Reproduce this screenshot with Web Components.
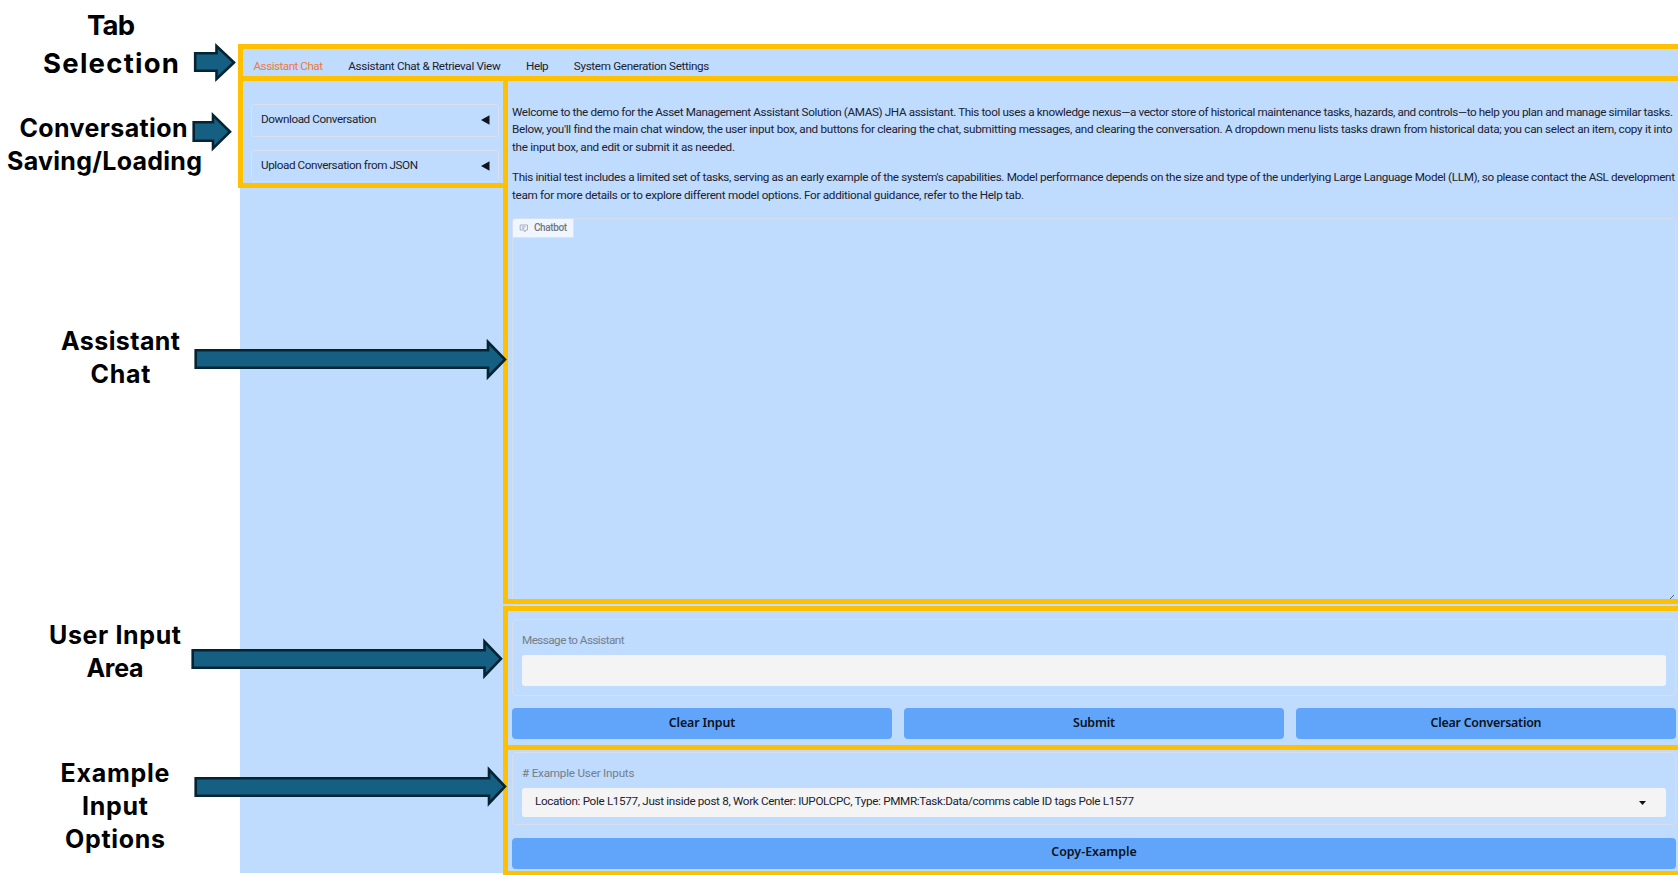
<!DOCTYPE html>
<html lang="en">
<head>
<meta charset="utf-8">
<title>AMAS JHA assistant guide</title>
<style>
html,body{margin:0;height:875px;overflow:hidden;background:#fff}
body{font-family:Roboto,"Liberation Sans",sans-serif;font-size:11.7px;color:#1b2230}
</style>
</head>
<body>
<guide-page></guide-page>
<script>
const define = (name, html, after) => customElements.define(name, class extends HTMLElement {
  connectedCallback() {
    if (this.shadowRoot) return;
    const t = document.createElement('template');
    t.innerHTML = typeof html === 'function' ? html(this) : html;
    this.attachShadow({mode: 'open'}).appendChild(t.content.cloneNode(true));
    if (after) after(this);
  }
});

/* One line of text, tracked so that it fills the width given in w. */
define('fit-line', `<style>:host{display:block;white-space:nowrap;width:max-content}span{display:inline-block}</style><span><slot></slot></span>`, el => {
  const s = el.shadowRoot.querySelector('span');
  const natural = s.getBoundingClientRect().width;
  const n = el.textContent.length;
  const track = (Number(el.getAttribute('w')) - natural) / (n - 1);
  s.style.letterSpacing = track.toFixed(4) + 'px';
  s.style.marginRight = (-track).toFixed(4) + 'px';
});

define('callout-label', `<style>:host{display:flex;flex-direction:column;align-items:center;font:700 25px/33px Inter,"Liberation Sans",sans-serif;color:#000}</style><slot></slot>`);

define('tab-bar', `<style>:host{display:flex;height:34px;padding:4px 14px 0 13.5px;box-sizing:border-box;line-height:34px;gap:25.3px}
::slotted([active]){color:#f2793a}</style><slot></slot>`);

define('fold-row', `<style>:host{display:flex;box-sizing:border-box;align-items:center;justify-content:space-between;border:1px solid #dbe1ec;border-radius:3px;padding:0 8px 0 9px}
::slotted(*){margin-top:-2px}
svg{display:block}</style><slot></slot><svg width="9" height="10"><path d="M0 5 8.5 .3V9.7Z" fill="#10151d"/></svg>`);

define('intro-text', `<style>:host{display:block;line-height:17.7px}div+div{margin-top:12.4px}</style>
<div><fit-line w="1161">Welcome to the demo for the Asset Management Assistant Solution (AMAS) JHA assistant. This tool uses a knowledge nexus—a vector store of historical maintenance tasks, hazards, and controls—to help you plan and manage similar tasks.</fit-line>
<fit-line w="1160">Below, you'll find the main chat window, the user input box, and buttons for clearing the chat, submitting messages, and clearing the conversation. A dropdown menu lists tasks drawn from historical data; you can select an item, copy it into</fit-line>
<fit-line w="223">the input box, and edit or submit it as needed.</fit-line></div>
<div><fit-line w="1163">This initial test includes a limited set of tasks, serving as an early example of the system's capabilities. Model performance depends on the size and type of the underlying Large Language Model (LLM), so please contact the ASL development</fit-line>
<fit-line w="512">team for more details or to explore different model options. For additional guidance, refer to the Help tab.</fit-line></div>`);

define('chat-window', `<style>:host{display:block;box-sizing:border-box;border:1px solid #d6dfee;border-radius:3px;position:relative}
.tag{display:flex;align-items:center;width:61px;height:19px;box-sizing:border-box;background:#eff6ff;border:1px solid #dde4f0;border-width:0 1px 1px 0;border-radius:2px 0 2px 0;padding-left:6px;gap:5px;font-size:10px;font-weight:500;color:#717783}
.grip{position:absolute;right:0;bottom:0}</style>
<div class="tag"><svg width="10" height="10" viewBox="0 0 10 10" fill="none" stroke="#a0a7b5" stroke-width=".9"><path d="M6 8.5 7 7h1.5V2H1.2v5H5l1 2M3 3.8h3.5M3 5.3h2.5"/></svg><fit-line w="33">Chatbot</fit-line></div>
<svg class="grip" width="11" height="11"><path d="M1 10 10 1M6 10 10 6" stroke="#4b5563" stroke-width=".9"/></svg>`);

define('field-box', `<style>:host{display:flex;flex-direction:column;box-sizing:border-box;border:1px solid #d8dfec;border-radius:4px;padding:0 9.5px 0 9px;color:#757d8b}
.label{height:35px;padding-top:12px;box-sizing:border-box;line-height:17px}
.in{background:#f4f4f4;border-radius:3px;height:var(--in-h,31px);display:flex;align-items:center;justify-content:space-between;color:#1b2230;padding:0 20px 0 13px;box-sizing:border-box}
.in svg{display:none}:host([select]) .in svg{display:block}
::slotted([slot=value]){margin-top:-3px}</style>
<div class="label"><slot name="label"></slot></div><div class="in"><slot name="value"></slot><svg width="7" height="4"><path d="M0 0H7L3.5 4Z" fill="#111"/></svg></div>`);

define('action-button', `<style>:host{display:flex;justify-content:center;align-items:center;background:#60a5fa;border-radius:4px;height:31px;padding-bottom:2px;box-sizing:border-box;font:600 12.4px/20px "Noto Sans",sans-serif;color:#0b1220}</style><slot></slot>`);

define('callout-overlay', () => {
  const frames = [[238,44,1445,37],[238,76,270,112],[503,76,1180,528],[503,606,1180,144],[503,745,1180,131]];
  const arrows = [[194,236,52,72,215.5,42,83],[192.5,232,121,142,212,111,152.5],[194.5,507,349,369,487,338,381],[191.5,503,649,669,483.5,637.5,680],[194.5,507,777,797,488,765.5,807.5]];
  const f = frames.map(([x,y,w,h]) => `<rect x="${x+2.5}" y="${y+2.5}" width="${w-5}" height="${h-5}" fill="none" stroke="#ffc000" stroke-width="5"/>`).join('');
  const a = arrows.map(([l,r,t,b,hx,ht,hb]) => `<path d="M${l+1.2} ${t+1.2}H${hx+1}V${ht+4}L${r-2} ${(ht+hb)/2} ${hx+1} ${hb-4}V${b-1.2}H${l+1.2}Z" fill="#156082" stroke="#042433" stroke-width="2.6"/>`).join('');
  return `<style>:host{position:absolute;inset:0;pointer-events:none}svg{display:block}</style><svg width="1678" height="875">${f}${a}</svg>`;
});

define('guide-page', `<style>
:host{display:grid;grid-template-columns:240px 1fr;width:1678px;height:875px;position:relative;overflow:hidden}
.notes{position:relative;z-index:2}
.notes callout-label{width:max-content}
.app{background:#bfdbfe;margin-top:45px;height:828px;display:grid;grid-template-rows:34px 1fr}
.body{display:grid;grid-template-columns:272px 1164px}
.side{padding:25px 13px 0 11px;display:flex;flex-direction:column;gap:13px}
.side fold-row{height:32.5px}
.main{display:flex;flex-direction:column}
intro-text{margin-top:24.5px}
chat-window{height:388px;margin-top:13.1px}
.msg{height:76.5px;margin-top:13.5px}
.row{display:grid;grid-template-columns:repeat(3,1fr);gap:12px;margin-top:12.5px}
.ex{height:73px;margin-top:13px;--in-h:29px}
.copy{margin-top:12.5px}
</style>
<div class="notes">
<callout-label style="font-size:27.5px;line-height:36px;margin:7px 0 0 43px"><fit-line w="48">Tab</fit-line><fit-line w="136" style="margin-top:2px">Selection</fit-line></callout-label>
<callout-label style="margin:31px 0 0 7px"><fit-line w="168" style="margin-right:2px">Conversation</fit-line><fit-line w="195">Saving/Loading</fit-line></callout-label>
<callout-label style="margin:147px 0 0 61px"><fit-line w="119">Assistant</fit-line><fit-line w="60">Chat</fit-line></callout-label>
<callout-label style="margin:228px 0 0 49px"><fit-line w="132">User Input</fit-line><fit-line w="57">Area</fit-line></callout-label>
<callout-label style="margin:71.5px 0 0 60.5px"><fit-line w="109">Example</fit-line><fit-line w="66">Input</fit-line><fit-line w="100">Options</fit-line></callout-label>
</div>
<div class="app">
<tab-bar><fit-line active w="69.5">Assistant Chat</fit-line><fit-line w="152.5">Assistant Chat &amp; Retrieval View</fit-line><fit-line w="22.5">Help</fit-line><fit-line w="135.5">System Generation Settings</fit-line></tab-bar>
<div class="body">
<div class="side"><fold-row><fit-line w="115.5">Download Conversation</fit-line></fold-row><fold-row><fit-line w="157">Upload Conversation from JSON</fit-line></fold-row></div>
<div class="main">
<intro-text></intro-text>
<chat-window></chat-window>
<field-box class="msg"><fit-line slot="label" w="102.5">Message to Assistant</fit-line></field-box>
<div class="row"><action-button><fit-line w="66.5">Clear Input</fit-line></action-button><action-button><fit-line w="42">Submit</fit-line></action-button><action-button><fit-line w="111">Clear Conversation</fit-line></action-button></div>
<field-box class="ex" select><fit-line slot="label" w="112.5"># Example User Inputs</fit-line><fit-line slot="value" w="599">Location: Pole L1577, Just inside post 8, Work Center: IUPOLCPC, Type: PMMR:Task:Data/comms cable ID tags Pole L1577</fit-line></field-box>
<action-button class="copy"><fit-line w="85.5">Copy-Example</fit-line></action-button>
</div></div></div>
<callout-overlay></callout-overlay>`);
</script>
</body>
</html>
